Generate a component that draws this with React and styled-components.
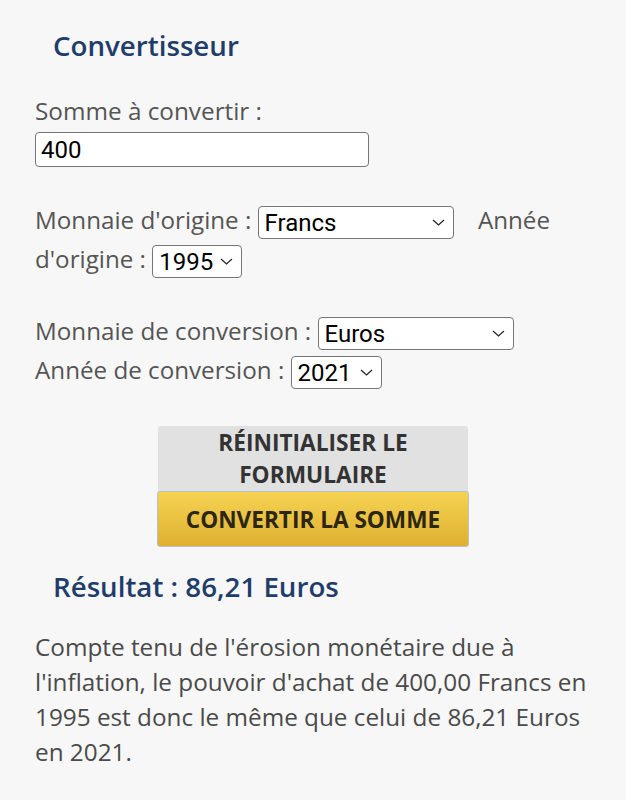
import React from 'react'
import styled, { createGlobalStyle } from 'styled-components'

const GlobalStyle = createGlobalStyle`
  body {
    margin: 0;
    background: #f7f7f7;
    font-family: "Open Sans", "Liberation Sans", sans-serif;
    color: #4a4a4a;
  }
`

const Page = styled.main`
  padding: 0 35px;
  width: 626px;
  box-sizing: border-box;
`

const Heading = styled.h2`
  margin: ${p => p.top}px 0 0 18px;
  font-size: 27.7px;
  font-weight: 600;
  line-height: 34px;
  color: #1f3d6b;
`

const Label = styled.div`
  margin-top: 31px;
  font-size: 24.3px;
  line-height: 36px;
  color: #555;
`

const TextInput = styled.input`
  display: block;
  width: 334px;
  height: 35px;
  box-sizing: border-box;
  margin: 3px 0 0;
  padding: 0 5px;
  border: 1.5px solid #767676;
  border-radius: 4px;
  background: #fff;
  font-family: Roboto, sans-serif;
  font-size: 24px;
  color: #000;
`

const Line = styled.p`
  margin: ${p => p.top}px 0 0;
  font-size: 24.2px;
  line-height: 39px;
  color: #555;
`

const SelectWrap = styled.span`
  position: relative;
  display: inline-block;
  vertical-align: middle;
  margin-right: ${p => p.gap || 0}px;
`

const Select = styled.select`
  display: block;
  appearance: none;
  width: ${p => p.w}px;
  height: 33px;
  box-sizing: border-box;
  padding: 0 24px 0 6px;
  border: 1.5px solid #767676;
  border-radius: 4px;
  background: #fff;
  font-family: Roboto, sans-serif;
  font-size: 24px;
  color: #000;
`

const Chevron = styled.svg`
  position: absolute;
  right: 9px;
  top: 13px;
  pointer-events: none;
`

const Buttons = styled.div`
  margin-top: 37px;
  display: flex;
  flex-direction: column;
  align-items: center;
`

const ResetButton = styled.button`
  width: 310px;
  padding: 1px 10px 1px;
  border: none;
  border-radius: 3px 3px 0 0;
  background: #e1e1e1;
  font-family: "Open Sans", sans-serif;
  font-size: 22.7px;
  font-weight: 700;
  line-height: 32px;
  color: #333;
  text-transform: uppercase;
`

const ConvertButton = styled.button`
  width: 312px;
  height: 56px;
  margin-top: -1px;
  padding: 0;
  border: 1px solid #b9c2cc;
  border-radius: 3px;
  background: linear-gradient(#f6d352, #dfaf30);
  font-family: "Open Sans", sans-serif;
  font-size: 22.6px;
  font-weight: 700;
  color: #2b2616;
  text-transform: uppercase;
`

const Text = styled.p`
  margin: 26px 0 0;
  font-size: 24.3px;
  line-height: 35px;
  color: #4a4a4a;
`

const Arrow = () => (
  <Chevron width="13" height="7" viewBox="0 0 13 7">
    <path d="M1 1l5.5 5L12 1" fill="none" stroke="#222" strokeWidth="1.2" />
  </Chevron>
)

const Dropdown = ({ w, value, gap }) => (
  <SelectWrap gap={gap}>
    <Select w={w} defaultValue={value}>
      <option>{value}</option>
    </Select>
    <Arrow />
  </SelectWrap>
)

export default function App() {
  return (
    <Page>
      <GlobalStyle />
      <Heading top={28}>Convertisseur</Heading>
      <Label>Somme à convertir :</Label>
      <TextInput defaultValue="400" />
      <Line top={33}>
        Monnaie d'origine : <Dropdown w={196} value="Francs" gap={18} /> Année d'origine :{' '}
        <Dropdown w={90} value="1995" />
      </Line>
      <Line top={33}>
        Monnaie de conversion : <Dropdown w={196} value="Euros" />
        <br />
        Année de conversion : <Dropdown w={91} value="2021" />
      </Line>
      <Buttons>
        <ResetButton>Réinitialiser le formulaire</ResetButton>
        <ConvertButton>Convertir la somme</ConvertButton>
      </Buttons>
      <Heading top={22}>Résultat : 86,21 Euros</Heading>
      <Text>
        Compte tenu de l'érosion monétaire due à l'inflation, le pouvoir d'achat de 400,00 Francs en
        1995 est donc le même que celui de 86,21 Euros en 2021.
      </Text>
    </Page>
  )
}
